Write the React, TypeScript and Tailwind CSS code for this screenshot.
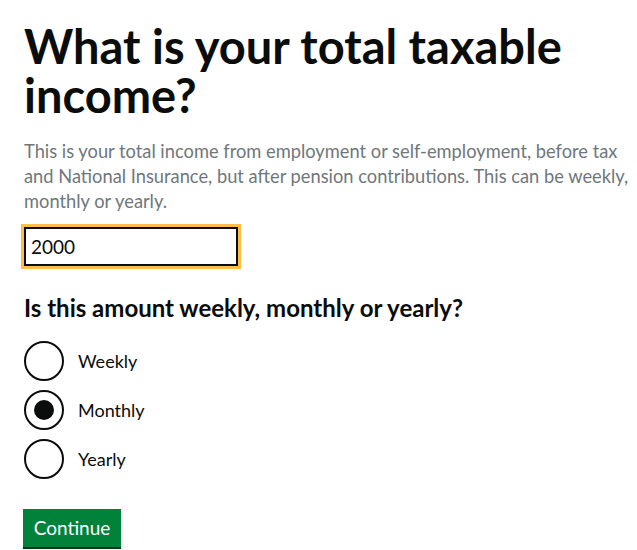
import React, { useState } from 'react';

const options = ['Weekly', 'Monthly', 'Yearly'];

export default function App() {
  const [period, setPeriod] = useState('Monthly');
  const [amount, setAmount] = useState('2000');

  return (
    <div
      className="bg-white min-h-screen px-6 pt-[22px] text-[#0b0c0c]"
      style={{ fontFamily: 'Lato, "Liberation Sans", Arial, sans-serif' }}
    >
      <h1 className="text-[47px] font-bold leading-[49px]">What is your total taxable income?</h1>
      <p className="mt-[19px] w-[612px] text-[18.3px] leading-[25px] text-[#6f777b]">
        This is your total income from employment or self-employment, before tax and National Insurance, but after
        pension contributions. This can be weekly, monthly or yearly.
      </p>
      <div className="mt-[10px] ml-[-3px] w-[220px] border-[3px] border-[#ffbf47]">
        <input
          value={amount}
          onChange={(e) => setAmount(e.target.value)}
          className="block w-full h-[39px] border-2 border-[#0b0c0c] px-[5px] text-[19px] text-[#0b0c0c] outline-none"
        />
      </div>
      <h2 className="mt-[24px] text-[24px] font-bold leading-[30px]">Is this amount weekly, monthly or yearly?</h2>
      <div className="mt-[18px] flex flex-col gap-[9px]">
        {options.map((o) => (
          <label key={o} className="flex items-center gap-[14px] cursor-pointer" onClick={() => setPeriod(o)}>
            <span className="w-[40px] h-[40px] rounded-full border-2 border-[#0b0c0c] flex items-center justify-center">
              {period === o && <span className="w-[20px] h-[20px] rounded-full bg-[#0b0c0c]" />}
            </span>
            <span className="text-[18px] leading-[25px]">{o}</span>
          </label>
        ))}
      </div>
      <button className="block mt-[30px] ml-[-1px] w-[98px] h-[38px] bg-[#00823b] text-white text-[19px] text-center shadow-[0_2px_0_#003618]">
        Continue
      </button>
    </div>
  );
}
